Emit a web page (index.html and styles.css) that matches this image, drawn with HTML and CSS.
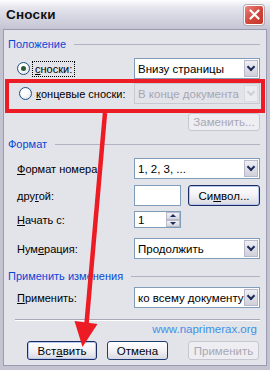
FILE: index.html
```html
<!DOCTYPE html>
<html>
  <head>
    <meta charset="utf-8" />
    <link rel="stylesheet" href="styles.css">
  </head>
  <body>
    <div class="window">
      <div class="titlebar">
        <span class="title">Сноски</span>
        <div class="close">
          <svg width="11" height="11" viewBox="0 0 11 11">
            <path d="M1.5 1.5 L9.5 9.5 M9.5 1.5 L1.5 9.5" stroke="#fff" stroke-width="2.2" stroke-linecap="round" />
          </svg>
        </div>
      </div>
      <div class="client">
        <div class="legend">Положение</div>
        <div class="row first">
          <div class="opt"><span class="radio on"></span><span class="focus"><u>с</u>носки:</span></div>
          <div class="select"><span>Внизу страницы</span><i class="drop"></i></div>
        </div>
        <div class="row second">
          <div class="opt"><span class="radio"></span><span><u>к</u>онцевые сноски:</span></div>
          <div class="select off"><span>В конце документа</span><i class="drop"></i></div>
        </div>
        <div class="row-end">
          <div class="btn off small">Заменить...</div>
        </div>

        <div class="legend legend-fmt">Формат</div>
        <div class="row fmt">
          <span class="label"><u>Ф</u>ормат номера:</span>
          <div class="select"><span>1, 2, 3, ...</span><i class="drop"></i></div>
        </div>
        <div class="row other">
          <span class="label">дру<u>г</u>ой:</span>
          <div class="pair">
            <div class="edit"></div>
            <div class="btn focusbtn">Си<u>м</u>вол...</div>
          </div>
        </div>
        <div class="row start">
          <span class="label"><u>Н</u>ачать с:</span>
          <div class="spin">
            <span class="spin-val">1</span>
            <div class="spin-btns">
              <div class="spin-btn"><i class="up"></i></div>
              <div class="spin-btn"><i class="down"></i></div>
            </div>
          </div>
        </div>
        <div class="row numbering">
          <span class="label">Нум<u>е</u>рация:</span>
          <div class="select"><span>Продолжить</span><i class="drop"></i></div>
        </div>

        <div class="legend legend-apply">Применить изменения</div>
        <div class="row apply">
          <span class="label"><u>П</u>рименить:</span>
          <div class="select"><span>ко всему документу</span><i class="drop"></i></div>
        </div>

        <div class="sep"></div>
        <div class="site">www.naprimerax.org</div>
        <div class="buttons">
          <div class="btn insert">Вст<u>а</u>вить</div>
          <div class="btn cancel">Отмена</div>
          <div class="btn off applybtn">Применить</div>
        </div>
      </div>

      <svg class="annot" width="270" height="370" viewBox="0 0 270 370">
        <rect x="7" y="81" width="256" height="30" fill="none" stroke="#ec1b24" stroke-width="4" />
        <path d="M105 113 L86.5 324" stroke="#ec1b24" stroke-width="4.5" />
        <polygon points="74.5,321 97.5,324 82.5,347" fill="#ec1b24" />
      </svg>
    </div>
  </body>
</html>
```

FILE: styles.css
```css
html,
body {
  margin: 0;
  padding: 0;
}
body {
  font-family: "Liberation Sans", Arial, sans-serif;
  font-size: 11px;
  color: #000;
}
u {
  text-decoration: underline;
  text-underline-offset: 1px;
}
.window {
  position: relative;
  width: 270px;
  height: 370px;
  box-sizing: border-box;
  display: flex;
  flex-direction: column;
  background: #c3c3d2;
}
.titlebar {
  height: 29px;
  flex: none;
  display: flex;
  align-items: center;
  justify-content: space-between;
  padding: 0 6px 1px 6px;
  box-sizing: border-box;
  background: linear-gradient(#fdfdfe 0%, #e6e6ee 25%, #d6d6e2 60%, #c4c4d4 100%);
}
.title {
  font-weight: bold;
  font-size: 13.5px;
  color: #111;
  letter-spacing: 0.2px;
}
.close {
  width: 20px;
  height: 20px;
  box-sizing: border-box;
  border: 1px solid #fff;
  border-radius: 3px;
  background: linear-gradient(135deg, #e8857c, #d2453a 55%, #c23529);
  display: flex;
  align-items: center;
  justify-content: center;
  box-shadow: 0 0 0 1px #b5a8b0;
  margin-top: 1px;
}
.client {
  flex: 1;
  margin: 0 3px 4px 3px;
  border: 1px solid #9a9ab0;
  background: #e3e3ea;
  padding: 7px 6px 0 4px;
  display: flex;
  flex-direction: column;
}
.legend {
  display: flex;
  align-items: center;
  gap: 8px;
  height: 14px;
  color: #0c46d6;
  white-space: nowrap;
}
.legend::after {
  content: "";
  flex: 1;
  height: 1px;
  background: #b2b2c4;
}
.row {
  display: grid;
  grid-template-columns: 1fr 126px;
  align-items: center;
  height: 21px;
  padding-left: 9px;
  white-space: nowrap;
}
.first {
  margin-top: 7px;
}
.second {
  margin-top: 4px;
}
.opt {
  display: flex;
  align-items: center;
  gap: 4px;
}
.radio {
  width: 13px;
  height: 13px;
  box-sizing: border-box;
  border-radius: 50%;
  border: 1px solid #1d5180;
  background: radial-gradient(circle at 40% 35%, #fff 30%, #dcdce4 100%);
  display: flex;
  align-items: center;
  justify-content: center;
  flex: none;
}
.radio.on::after {
  content: "";
  width: 5px;
  height: 5px;
  border-radius: 50%;
  background: #2c5a3a;
}
.second .radio {
  margin-left: 2px;
}
.focus {
  outline: 1px dotted #000;
  outline-offset: 1px;
  padding: 0 1px;
}
.select {
  height: 21px;
  box-sizing: border-box;
  border: 1px solid #7f9db9;
  background: #fff;
  display: flex;
  align-items: center;
  justify-content: space-between;
  padding: 1px 1px 1px 3px;
  overflow: hidden;
}
.select span {
  font-size: 11.5px;
  overflow: hidden;
}
.drop {
  width: 14px;
  height: 17px;
  flex: none;
  box-sizing: border-box;
  border: 1px solid #b9b9cb;
  background: linear-gradient(#eeeef4, #d0d0dc);
  display: flex;
  align-items: center;
  justify-content: center;
}
.drop::after {
  content: "";
  width: 4px;
  height: 4px;
  border-right: 2px solid #1e2a58;
  border-bottom: 2px solid #1e2a58;
  transform: translateY(-2px) rotate(45deg);
}
.select.off {
  border-color: #c9c9d2;
  background: #e3e3ea;
  color: #a6a6b4;
}
.select.off .drop {
  background: #ececf1;
  border-color: #dadae2;
}
.select.off .drop::after {
  border-color: #cfcfd8;
}
.row-end {
  display: flex;
  justify-content: flex-end;
  margin-top: 9px;
}
.btn {
  height: 19px;
  box-sizing: border-box;
  border: 1px solid #1f3d75;
  border-radius: 3px;
  background: linear-gradient(#ffffff 0%, #f2f2f6 50%, #d8d8e2 100%);
  display: flex;
  align-items: center;
  justify-content: center;
  font-size: 11.5px;
}
.btn.off {
  border-color: #c6c6d0;
  color: #a8a8b4;
  background: #ededf2;
}
.small {
  width: 72px;
  height: 18px;
}
.legend-fmt {
  margin-top: 6px;
}
.fmt {
  margin-top: 7px;
}
.other {
  margin-top: 6px;
}
.pair {
  display: flex;
  gap: 7px;
  height: 21px;
}
.edit {
  width: 47px;
  box-sizing: border-box;
  border: 1px solid #7f9db9;
  background: #fff;
}
.focusbtn {
  flex: 1;
  height: 21px;
  border-color: #1a2c62;
  box-shadow: inset 0 0 0 1px #b7c8ee;
}
.start {
  margin-top: 5px;
  height: 17px;
}
.spin {
  width: 47px;
  height: 17px;
  box-sizing: border-box;
  border: 1px solid #7f9db9;
  background: #fff;
  display: flex;
  justify-content: space-between;
  align-items: center;
  padding: 0 0 0 3px;
}
.spin-val {
  font-size: 11.5px;
}
.spin-btns {
  display: flex;
  flex-direction: column;
  width: 14px;
  height: 15px;
}
.spin-btn {
  flex: 1;
  box-sizing: border-box;
  border: 1px solid #b9b9cb;
  background: linear-gradient(#f2f2f6, #d4d4de);
  display: flex;
  align-items: center;
  justify-content: center;
}
.up,
.down {
  width: 0;
  height: 0;
  border-left: 3px solid transparent;
  border-right: 3px solid transparent;
}
.up {
  border-bottom: 3px solid #1e2a58;
}
.down {
  border-top: 3px solid #1e2a58;
}
.numbering {
  margin-top: 10px;
}
.legend-apply {
  margin-top: 10px;
}
.apply {
  margin-top: 4px;
}
.sep {
  margin: 11px 0 0 7px;
  height: 1px;
  background: #a8a8b8;
  border-bottom: 1px solid #fff;
}
.site {
  margin-top: 2px;
  height: 13px;
  text-align: right;
  padding-right: 3px;
  color: #3c92e8;
  font-size: 11.5px;
}
.buttons {
  display: flex;
  margin-top: 5px;
  padding-left: 19px;
}
.insert {
  width: 70px;
  border-color: #1a2c62;
  box-shadow: inset 0 0 0 1px #b7c8ee;
}
.cancel {
  width: 61px;
  margin-left: 10px;
}
.applybtn {
  width: 71px;
  margin-left: 20px;
}
.annot {
  position: absolute;
  left: 0;
  top: 0;
  pointer-events: none;
}
```
